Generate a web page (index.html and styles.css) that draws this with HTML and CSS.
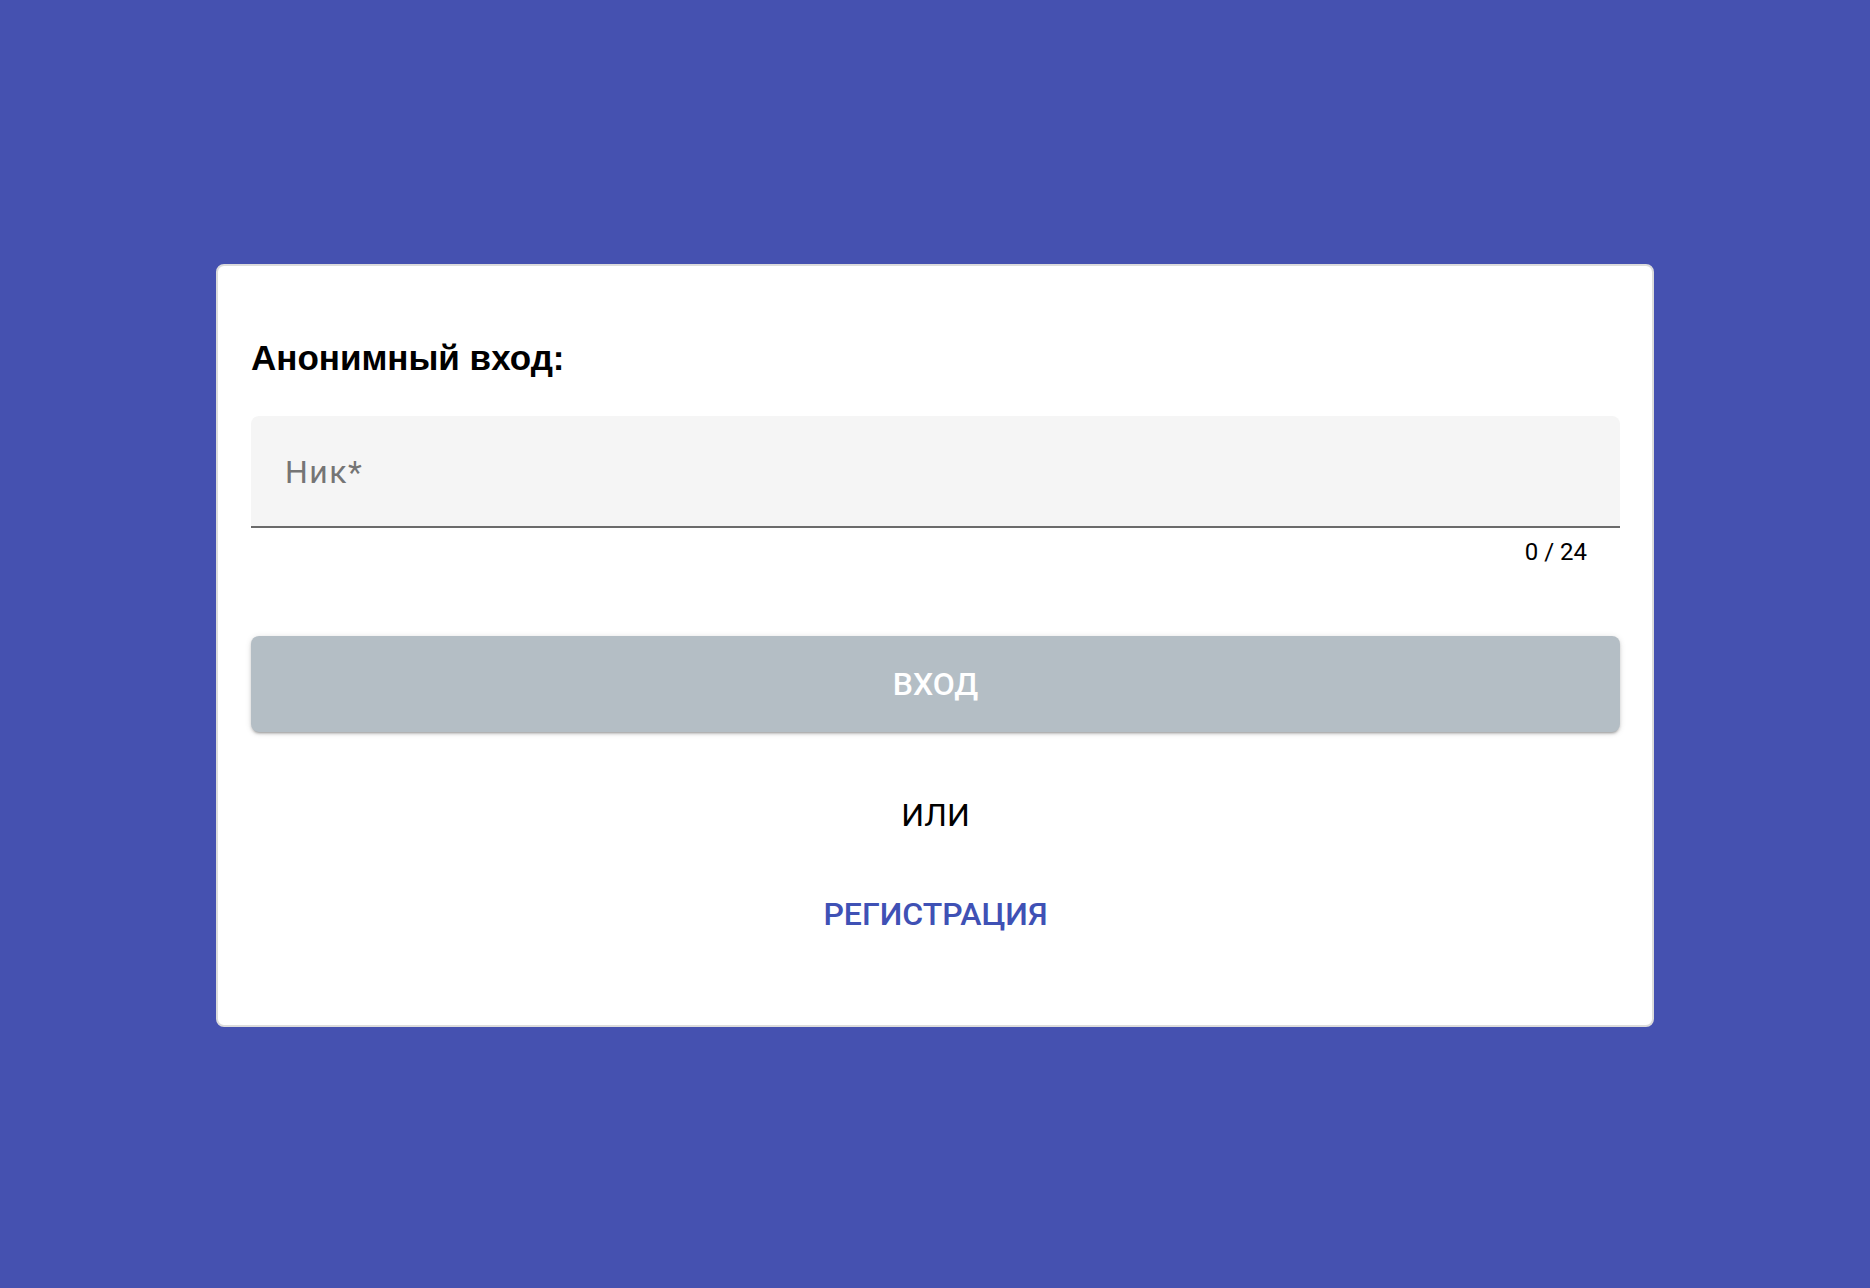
FILE: index.html
```html
<!DOCTYPE html>
<html lang="ru">
<head>
<meta charset="utf-8">
<title>Вход</title>
<link rel="stylesheet" href="styles.css">
</head>
<body>
<main class="page">
  <section class="card">
    <h1 class="card-title">Анонимный вход:</h1>
    <div class="field">
      <div class="field-box">
        <input class="field-input" type="text" placeholder="Ник*" maxlength="24">
      </div>
      <div class="field-counter">0 / 24</div>
    </div>
    <button class="btn-login" type="button">ВХОД</button>
    <div class="or">ИЛИ</div>
    <a class="register" href="#">РЕГИСТРАЦИЯ</a>
  </section>
</main>
</body>
</html>
```

FILE: styles.css
```css
* {
  box-sizing: border-box;
}

html, body {
  margin: 0;
  padding: 0;
}

body {
  background: #4551b0;
  font-family: Roboto, "Noto Sans", "Liberation Sans", sans-serif;
  color: #000;
}

.page {
  min-height: 100vh;
  padding-top: 3px;
  display: flex;
  align-items: center;
  justify-content: center;
}

.card {
  width: 1438px;
  background: #fff;
  border: 2px solid #dcdcdc;
  border-radius: 8px;
  padding: 70px 32px 91px 33px;
  display: flex;
  flex-direction: column;
}

.card-title {
  margin: 0 0 36px 0;
  font-family: "Liberation Sans", Arial, sans-serif;
  font-weight: 700;
  font-size: 35px;
  line-height: 44px;
  color: #000;
}

.field {
  display: flex;
  flex-direction: column;
}

.field-box {
  background: #f5f5f5;
  border-radius: 8px 8px 0 0;
  border-bottom: 2px solid #6b6b6b;
  height: 112px;
  padding: 36px 34px 0 34px;
}

.field-input {
  width: 100%;
  border: none;
  outline: none;
  background: transparent;
  padding: 0;
  margin: 0;
  font-family: Roboto, sans-serif;
  font-size: 32px;
  line-height: 40px;
  height: 40px;
  color: #000;
}

.field-input::placeholder {
  color: #757575;
  opacity: 1;
  letter-spacing: 1.5px;
}

.field-counter {
  align-self: flex-end;
  margin-top: 12px;
  padding-right: 33px;
  font-size: 24px;
  line-height: 24px;
  color: #000;
}

.btn-login {
  margin-top: 72px;
  height: 96px;
  border: none;
  border-radius: 8px;
  background: #b4bec5;
  color: #fff;
  font-family: Roboto, sans-serif;
  font-weight: 500;
  font-size: 32px;
  line-height: 40px;
  box-shadow: 0 3px 2px -2px rgba(0, 0, 0, 0.2), 0 2px 3px 0 rgba(0, 0, 0, 0.14), 0 1px 6px 0 rgba(0, 0, 0, 0.12);
  cursor: default;
}

.or {
  margin-top: 63px;
  text-align: center;
  font-size: 32px;
  line-height: 40px;
  color: #000;
}

.register {
  margin-top: 59px;
  align-self: center;
  font-weight: 500;
  font-size: 32px;
  line-height: 40px;
  color: #3f51b5;
  text-decoration: none;
}
```
